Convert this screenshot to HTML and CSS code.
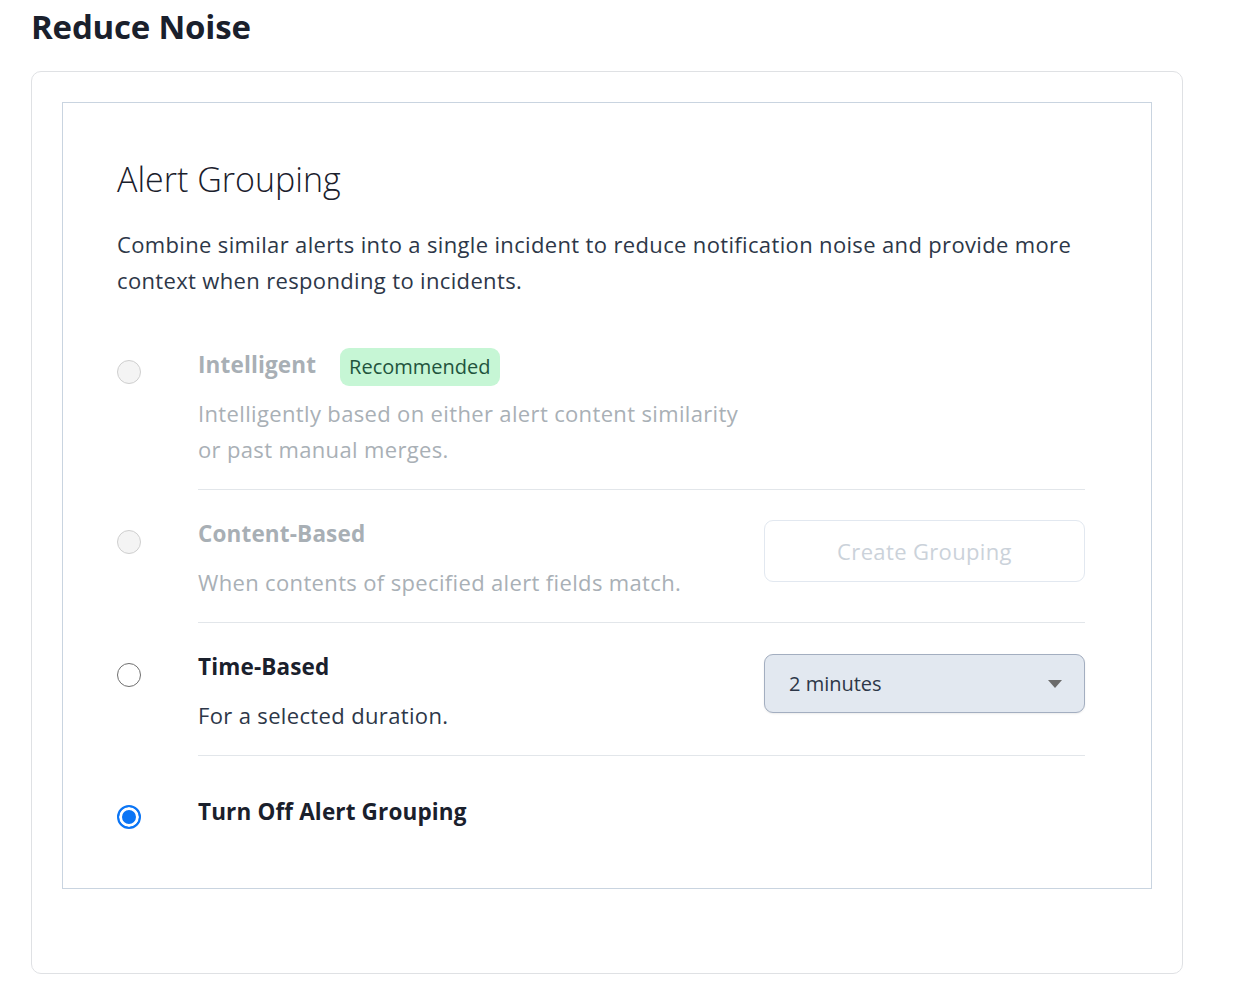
FILE: index.html
```html
<!DOCTYPE html>
<html lang="en">
<head>
<meta charset="utf-8">
<title>Reduce Noise</title>
<link rel="stylesheet" href="styles.css">
</head>
<body>
<main class="page">
  <h1 class="page-title">Reduce Noise</h1>
  <section class="card">
    <div class="panel">
      <h2 class="panel-title">Alert Grouping</h2>
      <p class="panel-desc">Combine similar alerts into a single incident to reduce notification noise and provide more context when responding to incidents.</p>

      <div class="options">
        <div class="option first is-disabled">
          <span class="radio radio-disabled"></span>
          <div class="option-body">
            <div class="option-head">
              <span class="option-title">Intelligent</span>
              <span class="badge">Recommended</span>
            </div>
            <p class="option-desc">Intelligently based on either alert content similarity<br>or past manual merges.</p>
          </div>
        </div>

        <div class="option is-disabled">
          <span class="radio radio-disabled"></span>
          <div class="option-body split">
            <div>
              <div class="option-head"><span class="option-title">Content-Based</span></div>
              <p class="option-desc">When contents of specified alert fields match.</p>
            </div>
            <button class="btn-outline" disabled>Create Grouping</button>
          </div>
        </div>

        <div class="option">
          <span class="radio"></span>
          <div class="option-body split">
            <div>
              <div class="option-head"><span class="option-title">Time-Based</span></div>
              <p class="option-desc">For a selected duration.</p>
            </div>
            <div class="select">
              <span>2 minutes</span>
              <span class="caret"></span>
            </div>
          </div>
        </div>

        <div class="option last">
          <span class="radio radio-checked"></span>
          <div class="option-body">
            <div class="option-head"><span class="option-title">Turn Off Alert Grouping</span></div>
          </div>
        </div>
      </div>
    </div>
  </section>
</main>
</body>
</html>
```

FILE: styles.css
```css
* { box-sizing: border-box; }
html, body { margin: 0; padding: 0; background: #ffffff; }
body {
  font-family: "Open Sans", "Noto Sans", "Liberation Sans", sans-serif;
  color: #2d3748;
}
.page { padding: 0 0 0 31px; }
.page-title {
  margin: 0;
  padding-top: 4px;
  font-size: 33px;
  line-height: 46px;
  font-weight: 700;
  color: #1a202c;
  letter-spacing: -0.2px;
}
.card {
  margin-top: 21px;
  width: 1152px;
  border: 1px solid #dfe1e4;
  border-radius: 10px;
  padding: 30px 30px 84px 30px;
}
.panel {
  border: 1px solid #c9d4e0;
  padding: 54px 66px 58px 54px;
}
.panel-title {
  margin: 0;
  font-size: 34px;
  line-height: 44px;
  font-weight: 300;
  color: #1a202c;
}
.panel-desc {
  margin: 25px 0 0 0;
  font-size: 22px;
  line-height: 36px;
  letter-spacing: 0.35px;
  color: #2d3748;
  max-width: 980px;
}
.options { margin-top: 34px; }
.option {
  display: flex;
  align-items: flex-start;
}
.radio {
  flex: 0 0 24px;
  width: 24px;
  height: 24px;
  margin-top: 40px;
  margin-right: 57px;
  border-radius: 50%;
  border: 1.5px solid #6f6f6f;
  background: #fff;
}
.radio-disabled {
  border-color: #cfcfcf;
  background: #f4f4f4;
}
.radio-checked {
  border: 2px solid #0b75f5;
  background: #0b75f5;
  box-shadow: inset 0 0 0 3px #fff;
}
.option-body {
  flex: 1;
  padding: 26px 0 22px 0;
  border-bottom: 1px solid #e2e6ea;
}
.option.first .option-body { padding-top: 12px; }
.option.first .radio { margin-top: 28px; }
.option.first .option-desc { margin-top: 9px; }
.option.last .option-body { border-bottom: none; padding-top: 38px; padding-bottom: 0; }
.option.last .radio { margin-top: 49px; }
.split {
  display: flex;
  justify-content: space-between;
  align-items: flex-start;
}
.option-head {
  display: flex;
  align-items: center;
  gap: 24px;
  min-height: 36px;
}
.option-title {
  font-size: 22.5px;
  line-height: 36px;
  font-weight: 700;
  letter-spacing: 0.15px;
  color: #1a202c;
}
.option-desc {
  margin: 12px 0 0 0;
  font-size: 22px;
  line-height: 36px;
  letter-spacing: 0.35px;
  color: #2d3748;
}
.is-disabled .option-title { color: #a8afb5; }
.is-disabled .option-desc { color: #a9b0b6; }
.badge {
  display: inline-block;
  background: #c6f6d5;
  color: #22543d;
  font-size: 20px;
  line-height: 38px;
  padding: 0 9px;
  border-radius: 9px;
  margin-top: 4px;
}
.btn-outline {
  width: 321px;
  height: 62px;
  margin-top: 4px;
  background: #fff;
  border: 1px solid #e2e8f0;
  border-radius: 9px;
  font-family: inherit;
  font-size: 22px;
  letter-spacing: 0.35px;
  color: #cbd2da;
}
.select {
  width: 321px;
  height: 59px;
  margin-top: 5px;
  background: #e2e8f0;
  border: 1px solid #a3aec0;
  border-radius: 9px;
  box-shadow: 0 1px 2px rgba(0,0,0,0.08);
  display: flex;
  align-items: center;
  justify-content: space-between;
  padding: 0 22px 0 24px;
  font-size: 20px;
  color: #2d3748;
}
.caret {
  width: 0;
  height: 0;
  border-left: 7px solid transparent;
  border-right: 7px solid transparent;
  border-top: 8px solid #6b6b6b;
}
```
